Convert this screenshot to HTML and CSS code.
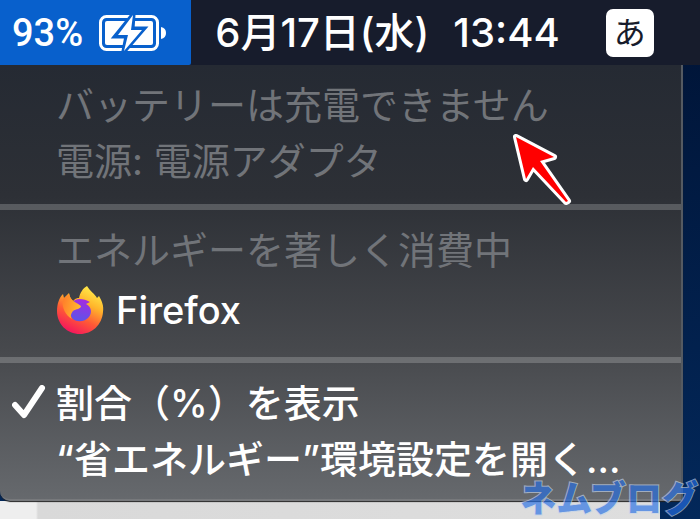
FILE: index.html
```html
<!DOCTYPE html>
<html lang="ja">
<head>
    <meta charset="UTF-8">
    <meta name="viewport" content="width=device-width, initial-scale=1.0">
    <title>バッテリー</title>
    <link rel="stylesheet" href="styles.css">
</head>
<body>

    <!-- Menu bar -->
    <header class="menubar">
        <button class="battery" type="button">
            <span>93%</span>
            <svg class="battery-icon" width="68" height="38" viewBox="0 0 68 38">
                <rect x="1.5" y="2.5" width="57" height="33" rx="6" fill="none" stroke="#fff" stroke-width="3"/>
                <rect x="6" y="7" width="48" height="24" rx="2" fill="#fff"/>
                <path d="M62 13 Q67 14 67 19 Q67 24 62 25Z" fill="#fff"/>
                <path d="M34 1 L17 22 H28 L25 37 L44 15 H33Z" fill="#0860cc" stroke="#0860cc" stroke-width="5"/>
                <path d="M34 1 L19 21 H29 L25 37 L43 16 H32Z" fill="#fff"/>
            </svg>
        </button>
        <time class="clock" datetime="2020-06-17T13:44">
            <span>6月17日(水)</span>
            <span>13:44</span>
        </time>
        <button class="input-source" type="button">あ</button>
    </header>

    <!-- Battery menu -->
    <main class="menu">
        <section class="group">
            <p class="item disabled">バッテリーは充電できません</p>
            <p class="item disabled">電源: 電源アダプタ</p>
        </section>
        <section class="group">
            <p class="item disabled">エネルギーを著しく消費中</p>
            <button class="item app" type="button">
                <svg class="app-icon" width="48" height="48" viewBox="0 0 48 48">
                    <defs>
                        <linearGradient id="flame" x1="0.8" y1="0" x2="0.3" y2="1">
                            <stop offset="0" stop-color="#fff44f"/>
                            <stop offset="0.35" stop-color="#ffb52b"/>
                            <stop offset="0.65" stop-color="#ff5a35"/>
                            <stop offset="1" stop-color="#f31260"/>
                        </linearGradient>
                        <linearGradient id="globe" x1="0.6" y1="0" x2="0.4" y2="1">
                            <stop offset="0" stop-color="#a52be0"/>
                            <stop offset="1" stop-color="#5b55e8"/>
                        </linearGradient>
                        <linearGradient id="fox" x1="0" y1="0" x2="1" y2="0.3">
                            <stop offset="0" stop-color="#ff7a2a"/>
                            <stop offset="1" stop-color="#ffb82e"/>
                        </linearGradient>
                    </defs>
                    <path d="M31 0 C34 5 39 8 41 12 L43 10 C46 15 48 20 47 26 C46 39 36 48 24 48 C11 48 1 38 1 25 C1 18 3 12 7 8 L8 12 L13 7 L14 11 L17 15 C20 12 21 12 23 12 C24 7 27 2 31 0Z" fill="url(#flame)"/>
                    <path d="M16 17 C19 12 27 12 34 16 L30 18 C36 21 36 27 33 31 C29 36 20 37 16 32 C13 27 13 21 16 17Z" fill="url(#globe)"/>
                    <path d="M7 13 L13 8 L15 13 C18 16 21 17 25 20 C25 23 20 23 17 25 C15 28 14 30 16 33 C10 30 5 21 7 13Z" fill="url(#fox)"/>
                </svg>
                <span>Firefox</span>
            </button>
        </section>
        <section class="group">
            <button class="item" type="button">
                <svg class="check" width="34" height="36" viewBox="0 0 34 36">
                    <path d="M3 20 L12 30 L30 3" fill="none" stroke="#fff" stroke-width="6" stroke-linecap="round" stroke-linejoin="round"/>
                </svg>
                <span>割合（%）を表示</span>
            </button>
            <button class="item" type="button">“省エネルギー”環境設定を開く...</button>
        </section>
    </main>

    <!-- Window behind the menu -->
    <div class="window"></div>

    <svg class="pointer" width="64" height="80" viewBox="0 0 64 80">
        <path d="M6 6 L44 26 L30 30 L58 70 L56 71 L23 36 L16 48Z" fill="#f00" stroke="#fff" stroke-width="6" stroke-linejoin="round" paint-order="stroke"/>
    </svg>
    <div class="watermark">ネムブログ</div>

</body>
</html>
```

FILE: styles.css
```css
* {
    margin: 0;
    padding: 0;
    box-sizing: border-box;
}

body {
    font-family: Inter, "Noto Sans CJK JP", sans-serif;
    font-size: 38px;
    line-height: 56px;
    color: white;
    background: linear-gradient(#001335, #03285a);
    display: flex;
    flex-direction: column;
    min-height: 100vh;
    position: relative;
    overflow: hidden;
}

button {
    font: inherit;
    color: inherit;
    background: none;
    border: none;
    text-align: left;
}

/* Menu bar */
.menubar {
    display: flex;
    align-items: center;
    height: 65px;
    background-color: #171c2c;
    white-space: nowrap;
}

.battery {
    display: flex;
    align-items: center;
    gap: 16px;
    height: 65px;
    padding: 0 24px 0 12px;
    background-color: #0860cc;
    border-radius: 0 0 2px 0;
    font-family: Roboto, sans-serif;
    font-weight: 500;
}

.clock {
    display: flex;
    gap: 24px;
    margin-left: 24px;
    font-size: 40px;
    font-weight: 500;
}

.input-source {
    width: 48px;
    height: 48px;
    margin-left: 46px;
    background-color: white;
    border-radius: 7px;
    color: #171c2c;
    font-size: 32px;
    line-height: 48px;
    text-align: center;
}

/* Battery menu */
.menu {
    margin-right: 17px;
    background: linear-gradient(#252a33, #2d3036 30%, #47494d 66%, #66696d);
    border-right: 2px solid #555a61;
    border-bottom: 2px solid #77797c;
    border-radius: 0 0 4px 10px;
    box-shadow: 0 1px 1px #222;
    position: relative;
}

.group {
    padding: 12px 0 15px;
}

.group + .group {
    border-top: 6px solid rgba(255, 255, 255, 0.2);
}

.group:last-child {
    padding-bottom: 12px;
}

.item {
    display: block;
    position: relative;
    width: 100%;
    height: 56px;
    padding-left: 56px;
    font-weight: 500;
    white-space: nowrap;
}

.disabled {
    color: #717479;
    font-weight: 400;
}

.app {
    display: flex;
    align-items: center;
    gap: 12px;
    height: 64px;
}

.check {
    position: absolute;
    left: 12px;
    top: 10px;
}

.window {
    flex: 1;
    margin-right: 40px;
    background: linear-gradient(90deg, #eee 36px, #d9d9d9 38px, #dedede);
}

/* Overlays */
.pointer {
    position: absolute;
    left: 510px;
    top: 131px;
}

.watermark {
    position: absolute;
    right: 2px;
    bottom: 0;
    font-size: 36px;
    font-weight: 900;
    line-height: 40px;
    color: #266fe5;
    -webkit-text-stroke: 2px #c3d3ea;
    paint-order: stroke fill;
    opacity: 0.65;
}
```
